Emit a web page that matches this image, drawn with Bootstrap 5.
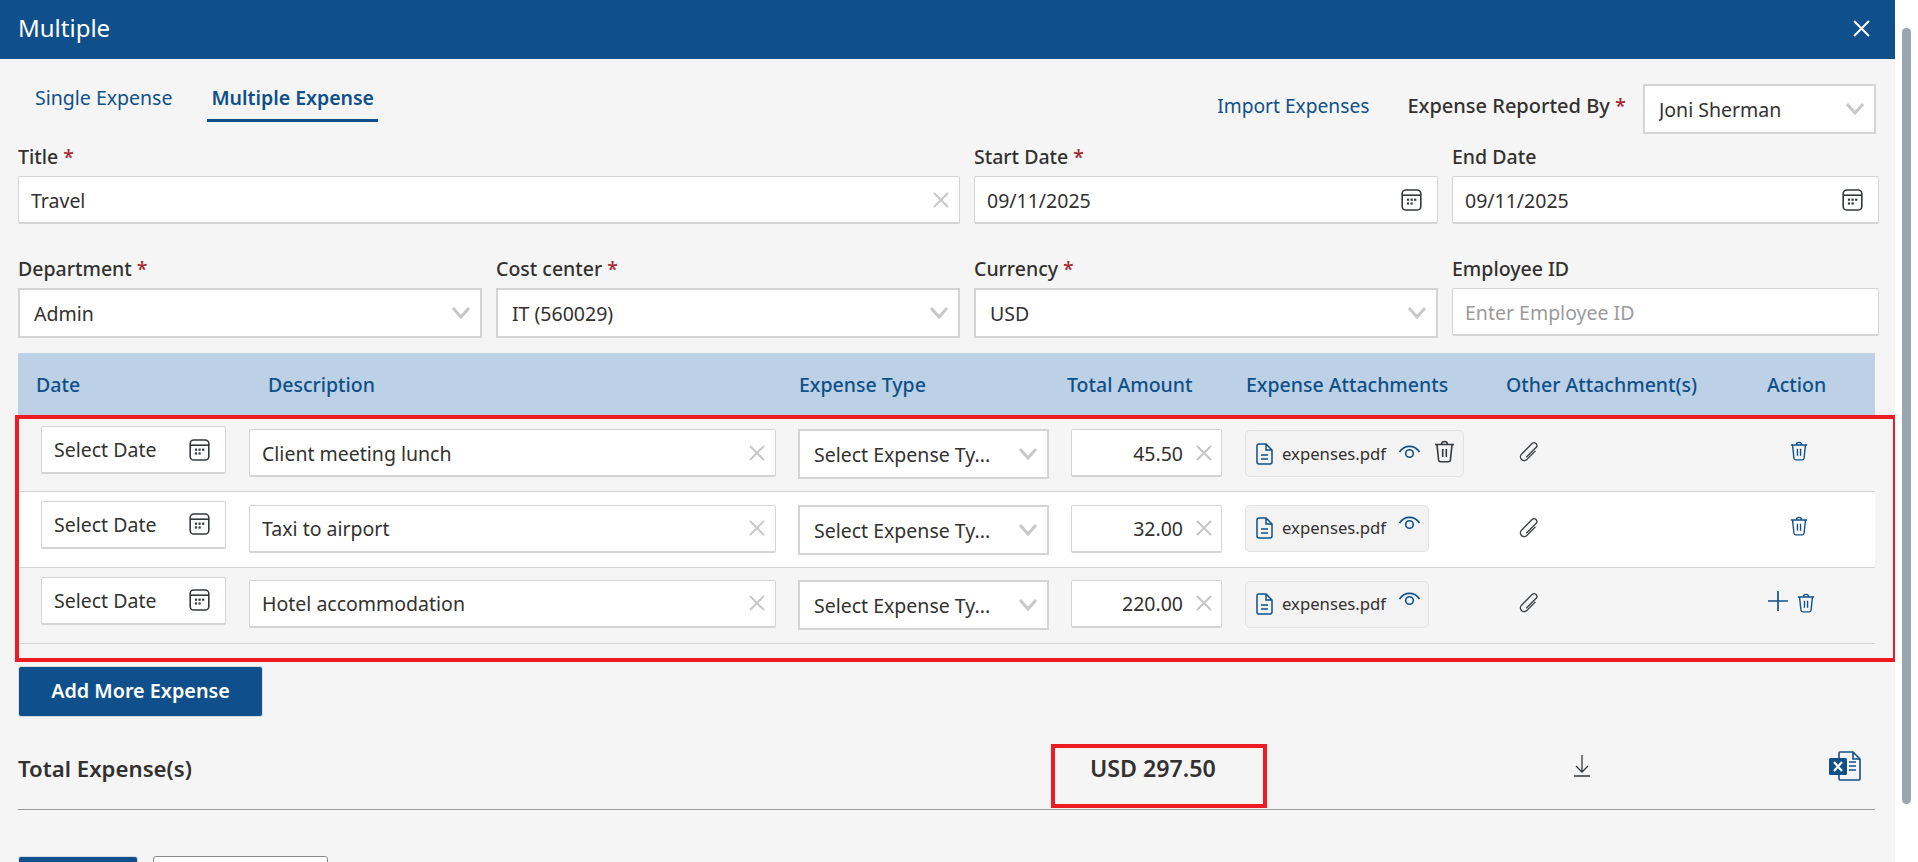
<!DOCTYPE html>
<html lang="en">
<head>
    <meta charset="UTF-8">
    <meta name="viewport" content="width=device-width, initial-scale=1.0">
    <title>Multiple</title>
    <link href="https://cdn.jsdelivr.net/npm/bootstrap@5.3.0/dist/css/bootstrap.min.css" rel="stylesheet">
    <style>
        html, body { height: 862px; overflow: hidden; background: #fff; }
        body { font-family: "Noto Sans", "Liberation Sans", sans-serif; font-size: 19.5px; color: #323130; }
        .page-wrap { height: 862px; }
        .modal-pane { width: 1895px; height: 862px; background: #f5f5f5; flex: none; overflow: hidden; }
        .scroll-track { flex: 1; padding: 28px 0 0 7px; }
        .scroll-thumb { width: 9px; height: 776px; background: #9aa5ad; border-radius: 5px; }
        .pane-head { height: 59px; background: #0f4f8b; color: #fff; font-size: 24px; padding: 0 25px 3px 18px; }
        .top-strip { height: 86px; padding-left: 18px; padding-right: 19px; }
        .tab-item { padding: 0 4px; height: 41px; margin-top: 22px; line-height: 34px; text-decoration: none; color: #0f5089; white-space: nowrap; }
        .tab-item.tab-first { margin-left: 13px; margin-right: 31px; }
        .tab-item.tab-on { font-weight: 600; border-bottom: 3px solid #0f5089; }
        .top-right { padding-top: 25px; }
        .import-link { color: #0f5089; text-decoration: none; font-size: 19.2px; margin: 9px 38px 0 0; line-height: 26px; }
        .rep-label { font-size: 20px; font-weight: 500; margin: 9px 17px 0 0; line-height: 26px; }
        .req { color: #a4262c; }
        .form-area { display: grid; grid-template-columns: 464px 464px 464px 427px; column-gap: 14px; row-gap: 33px; padding-left: 18px; }
        .title-cell { grid-column: span 2; }
        .fld-label { display: block; font-weight: 500; line-height: 24px; margin-bottom: 7px; }
        .fld-box { height: 48px; background: #fff; border: 1px solid #d4d4d4; border-bottom-width: 2px; border-radius: 2px; padding: 0 10px 0 12px; }
        .fld-box.has-cal { padding-right: 15px; }
        .fld-box input { min-width: 0; flex: 1; border: 0; outline: 0; background: transparent; color: #323130; padding: 2px 0 0; }
        .fld-box input::placeholder { color: #9b9b9b; }
        .pick { height: 50px; border: 2px solid #d4d4d4; border-radius: 0; font-size: 19.5px; color: #323130; padding: 2px 30px 0 14px;
            background-position: right 9px center; background-size: 20px 14px;
            background-image: url("data:image/svg+xml,%3csvg xmlns='http://www.w3.org/2000/svg' viewBox='0 0 20 14'%3e%3cpath fill='none' stroke='%23c8c8c8' stroke-width='3' d='M2 2l8 9 8-9'/%3e%3c/svg%3e"); }
        .joni-pick { width: 233px; }
        .x-ico { width: 16px; height: 16px; flex: none; color: #c6c6c6; }
        .cal-ico { width: 21px; height: 22px; flex: none; color: #33383d; }
        .table-wrap { margin: 15px 0 0 18px; width: 1857px; }
        .exp-table { table-layout: fixed; width: 1857px; margin: 0; }
        .exp-table th { height: 62px; background: #bcd1e5; color: #0f5089; font-weight: 500; vertical-align: middle; padding: 2px 0 0; border: 0; white-space: nowrap; }
        .exp-table th:nth-child(1) { width: 225px; padding-left: 18px; }
        .exp-table th:nth-child(2) { width: 547px; padding-left: 25px; }
        .exp-table th:nth-child(3) { width: 272px; padding-left: 9px; }
        .exp-table th:nth-child(4) { width: 178px; padding-left: 5px; }
        .exp-table th:nth-child(5) { width: 250px; padding-left: 6px; }
        .exp-table th:nth-child(6) { width: 250px; padding-left: 16px; }
        .exp-table th:nth-child(7) { width: 135px; padding-left: 27px; }
        .exp-table td { height: 76px; background: #f5f5f5; padding: 0; vertical-align: top; border-bottom: 1px solid #d6d3d3; color: #323130; }
        .exp-table tr.row-white td { background: #fff; }
        .date-box { width: 185px; margin: 9px 0 0 23px; }
        .date-box span { flex: 1; padding-top: 1px; }
        .desc-box { width: 527px; margin: 13px 0 0 6px; }
        .type-pick { width: 251px; margin: 13px 0 0 8px; padding-left: 14px; }
        .amt-box { width: 151px; margin: 13px 0 0 9px; padding-right: 9px; }
        .amt-box input { text-align: right; margin-right: 13px; }
        .att-chip { height: 47px; margin: 13px 0 0 5px; padding: 0 8px 0 10px; background: #f3f3f3; border: 1px solid #e2e2e2; border-radius: 5px; font-size: 16.7px; display: inline-flex; align-items: center; }
        .file-ico { width: 17px; height: 22px; color: #0f5089; margin-right: 9px; }
        .eye-ico { width: 21px; height: 18px; color: #0f5089; margin-left: 13px; margin-top: -11px; }
        .bin-ico { width: 21px; height: 23px; color: #33383d; margin-left: 14px; margin-top: -4px; }
        .clip-ico { width: 30px; height: 30px; color: #3d4247; margin: 21px 0 0 24px; display: block; }
        .act-cell { padding: 24px 0 0 50px !important; }
        .act-bin { width: 18px; height: 20px; color: #0f5089; display: block; }
        .plus-ico { width: 20px; height: 20px; color: #0f5089; margin: -4px 9px 0 0; }
        .exp-table tr:first-child .date-box { margin-top: 11px; }
        .exp-table tr:first-child .desc-box, .exp-table tr:first-child .amt-box, .exp-table tr:first-child .type-pick { margin-top: 14px; }
        .exp-table tr:first-child .att-chip { margin-top: 15px; }
        .exp-table tr:first-child .eye-ico { margin-top: -4px; }
        .exp-table tr:first-child .clip-ico { margin-top: 22px; }
        .exp-table tr:first-child .act-cell { padding-top: 26px !important; }
        .exp-table tr:last-child .desc-box, .exp-table tr:last-child .amt-box, .exp-table tr:last-child .type-pick { margin-top: 12px; }
        .exp-table tr:last-child .att-chip { margin-top: 13px; }
        .exp-table tr:last-child .clip-ico { margin-top: 20px; }
        .exp-table tr:last-child .act-cell { padding: 25px 0 0 28px !important; }
        .red-box { position: absolute; border: 4px solid #ed1c24; pointer-events: none; }
        .red-rows { left: -3px; right: -22px; top: 62px; height: 247px; }
        .btn-blue { background: #0f4f8b; border: 1px solid #d6dde5; color: #fff; font-size: 19.8px; font-weight: 600; border-radius: 3px; }
        .add-btn { width: 245px; height: 51px; margin: 22px 0 0 18px; padding: 0; display: block; }
        .total-strip { margin: 27px 20px 0 18px; height: 66px; border-bottom: 1px solid #999; width: 1857px; }
        .total-name { width: 1072px; font-size: 22.2px; font-weight: 600; padding-top: 8px; }
        .total-val { width: 484px; font-size: 23.2px; font-weight: 600; padding-top: 7px; }
        .red-total { left: -39px; width: 216px; top: 0; height: 64px; }
        .dl-ico { width: 16px; height: 22px; color: #33383d; margin-top: 11px; }
        .xl-ico { width: 32px; height: 30px; margin: 7px 0 0 239px; }
        .foot-btns { margin: 46px 0 0 18px; gap: 15px; }
        .foot-btn { height: 50px; border-radius: 3px; padding: 0; }
        .foot-save { width: 120px; }
        .foot-other { width: 175px; background: #fff; border: 1px solid #8a8a8a; }
    </style>
</head>
<body>
    <svg width="0" height="0" class="position-absolute">
        <symbol id="i-x" viewBox="0 0 16 16"><path d="M1 1l14 14M15 1L1 15" fill="none" stroke="currentColor" stroke-width="1.9"/></symbol>
        <symbol id="i-cal" viewBox="0 0 21 22"><rect x="1.2" y="1" width="18.6" height="20" rx="3.6" fill="none" stroke="currentColor" stroke-width="1.6"/><path d="M1.5 6.2h18" stroke="currentColor" stroke-width="1.6"/><g fill="currentColor"><rect x="5.9" y="9.6" width="2.2" height="2.2"/><rect x="9.5" y="9.6" width="2.2" height="2.2"/><rect x="13.1" y="9.6" width="2.2" height="2.2"/><rect x="5.9" y="13.4" width="2.2" height="2.2"/><rect x="9.5" y="13.4" width="2.2" height="2.2"/></g></symbol>
        <symbol id="i-file" viewBox="0 0 17 22"><path d="M3 1h7l6 6v12a2 2 0 0 1-2 2H3a2 2 0 0 1-2-2V3a2 2 0 0 1 2-2z M10 1v6h6 M5 12h7 M5 16h7" fill="none" stroke="currentColor" stroke-width="1.5"/></symbol>
        <symbol id="i-eye" viewBox="0 0 21 18"><path d="M.5 9C5.5 1.5 15.5 1.5 20.5 9" fill="none" stroke="currentColor" stroke-width="1.6"/><circle cx="10.5" cy="10.5" r="3.8" fill="none" stroke="currentColor" stroke-width="1.6"/></symbol>
        <symbol id="i-bin" viewBox="0 0 21 23"><path d="M1 4.5h19 M7.5 4.5c0-4 6-4 6 0 M3 5l1.6 15a2 2 0 0 0 2 1.8h7.8a2 2 0 0 0 2-1.8L18 5 M8.7 9v8 M12.3 9v8" fill="none" stroke="currentColor" stroke-width="1.6"/></symbol>
        <symbol id="i-clip" viewBox="0 0 24 24"><path transform="rotate(45 12 12)" d="M15 8v9.5a3 3 0 0 1-6 0V5.5a2.2 2.2 0 0 1 4.4 0V16" fill="none" stroke="currentColor" stroke-width="1.1" stroke-linecap="round"/></symbol>
        <symbol id="i-plus" viewBox="0 0 20 20"><path d="M10 0v20M0 10h20" stroke="currentColor" stroke-width="1.7"/></symbol>
    </svg>

    <div class="page-wrap d-flex">
        <div class="modal-pane">
            <div class="pane-head d-flex align-items-center justify-content-between">
                <span>Multiple</span>
                <svg width="17" height="17" class="text-white"><use href="#i-x"/></svg>
            </div>

            <div class="top-strip d-flex justify-content-between">
                <div class="d-flex align-items-start">
                    <a class="tab-item tab-first" href="#">Single Expense</a>
                    <a class="tab-item tab-on" href="#">Multiple Expense</a>
                </div>
                <div class="d-flex align-items-start top-right">
                    <a class="import-link" href="#">Import Expenses</a>
                    <span class="rep-label">Expense Reported By <span class="req">*</span></span>
                    <select class="form-select pick joni-pick"><option>Joni Sherman</option></select>
                </div>
            </div>

            <div class="form-area">
                <div class="title-cell">
                    <label class="fld-label">Title <span class="req">*</span></label>
                    <div class="fld-box d-flex align-items-center"><input type="text" value="Travel"><svg class="x-ico"><use href="#i-x"/></svg></div>
                </div>
                <div>
                    <label class="fld-label">Start Date <span class="req">*</span></label>
                    <div class="fld-box has-cal d-flex align-items-center"><input type="text" value="09/11/2025"><svg class="cal-ico"><use href="#i-cal"/></svg></div>
                </div>
                <div>
                    <label class="fld-label">End Date</label>
                    <div class="fld-box has-cal d-flex align-items-center"><input type="text" value="09/11/2025"><svg class="cal-ico"><use href="#i-cal"/></svg></div>
                </div>
                <div>
                    <label class="fld-label">Department <span class="req">*</span></label>
                    <select class="form-select pick"><option>Admin</option></select>
                </div>
                <div>
                    <label class="fld-label">Cost center <span class="req">*</span></label>
                    <select class="form-select pick"><option>IT (560029)</option></select>
                </div>
                <div>
                    <label class="fld-label">Currency <span class="req">*</span></label>
                    <select class="form-select pick"><option>USD</option></select>
                </div>
                <div>
                    <label class="fld-label">Employee ID</label>
                    <div class="fld-box d-flex align-items-center"><input type="text" placeholder="Enter Employee ID"></div>
                </div>
            </div>

            <div class="table-wrap position-relative">
                <table class="table exp-table">
                    <thead>
                        <tr>
                            <th>Date</th>
                            <th>Description</th>
                            <th>Expense Type</th>
                            <th>Total Amount</th>
                            <th>Expense Attachments</th>
                            <th>Other Attachment(s)</th>
                            <th>Action</th>
                        </tr>
                    </thead>
                    <tbody id="expense-rows"></tbody>
                </table>
                <div class="red-box red-rows"></div>
            </div>

            <button class="btn btn-blue add-btn">Add More Expense</button>

            <div class="total-strip d-flex">
                <div class="total-name">Total Expense(s)</div>
                <div class="total-val position-relative">USD 297.50<div class="red-box red-total"></div></div>
                <svg class="dl-ico" viewBox="0 0 16 22"><path d="M8 0v17M2 11l6 6 6-6M0 21h16" fill="none" stroke="currentColor" stroke-width="1.3"/></svg>
                <svg class="xl-ico" viewBox="0 0 32 30">
                    <path d="M10 7V2a1 1 0 0 1 1-1h13l7 7v20a1 1 0 0 1-1 1H11a1 1 0 0 1-1-1v-4 M24 1v7h7" fill="none" stroke="#0f5089" stroke-width="1.6"/>
                    <path d="M20 11h7M20 15h7M20 19h7" stroke="#0f5089" stroke-width="1.6"/>
                    <rect x="0" y="7" width="18" height="17" rx="1.5" fill="#0f5089"/>
                    <path d="M5 11l8 9M13 11l-8 9" stroke="#fff" stroke-width="2.2"/>
                </svg>
            </div>

            <div class="foot-btns d-flex">
                <button class="foot-btn foot-save btn-blue"></button>
                <button class="foot-btn foot-other"></button>
            </div>
        </div>
        <div class="scroll-track"><div class="scroll-thumb"></div></div>
    </div>

    <script>
        // Lignes du tableau des dépenses
        const expenses = [
            { desc: 'Client meeting lunch', amount: '45.50', removeFile: true },
            { desc: 'Taxi to airport', amount: '32.00', white: true },
            { desc: 'Hotel accommodation', amount: '220.00', add: true }
        ];

        const tbody = document.getElementById('expense-rows');
        expenses.forEach(e => {
            const tr = document.createElement('tr');
            if (e.white) tr.className = 'row-white';
            tr.innerHTML = `
                <td><div class="fld-box has-cal date-box d-flex align-items-center"><span>Select Date</span><svg class="cal-ico"><use href="#i-cal"/></svg></div></td>
                <td><div class="fld-box desc-box d-flex align-items-center"><input type="text" value="${e.desc}"><svg class="x-ico"><use href="#i-x"/></svg></div></td>
                <td><select class="form-select pick type-pick"><option>Select Expense Ty...</option></select></td>
                <td><div class="fld-box amt-box d-flex align-items-center"><input type="text" value="${e.amount}"><svg class="x-ico"><use href="#i-x"/></svg></div></td>
                <td><div class="att-chip"><svg class="file-ico"><use href="#i-file"/></svg>expenses.pdf<svg class="eye-ico"><use href="#i-eye"/></svg>${e.removeFile ? '<svg class="bin-ico"><use href="#i-bin"/></svg>' : ''}</div></td>
                <td><svg class="clip-ico"><use href="#i-clip"/></svg></td>
                <td class="act-cell"><div class="d-flex align-items-center">${e.add ? '<svg class="plus-ico"><use href="#i-plus"/></svg>' : ''}<svg class="act-bin"><use href="#i-bin"/></svg></div></td>
            `;
            tbody.appendChild(tr);
        });
    </script>
</body>
</html>
